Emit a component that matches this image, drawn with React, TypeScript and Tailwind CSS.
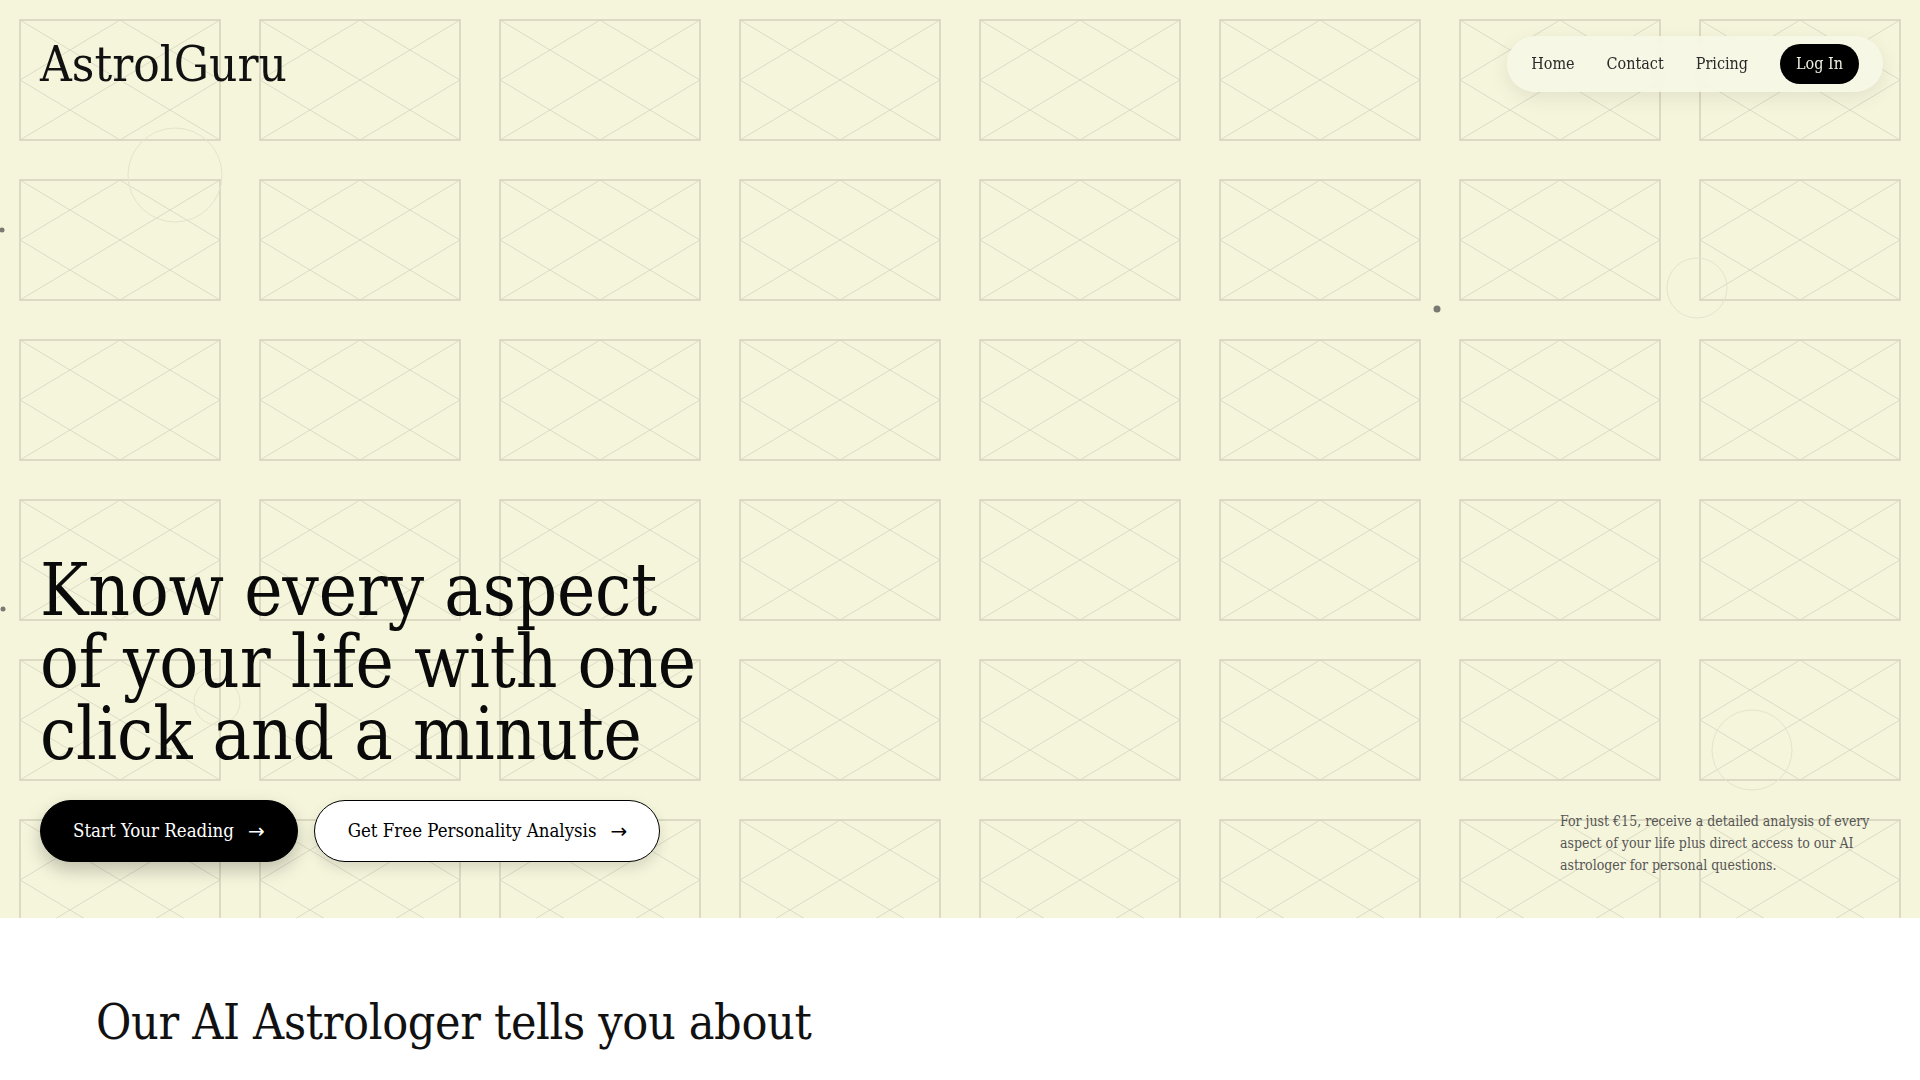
import React from "react";

const serif = { fontFamily: '"DejaVu Serif Condensed", "DejaVu Serif", "Liberation Serif", serif', fontStretch: "condensed" as const };
const arrowFont = { fontFamily: '"DejaVu Sans", sans-serif', fontStretch: "normal" as const };

function Pattern() {
  return (
    <svg className="absolute inset-0 w-full h-full" xmlns="http://www.w3.org/2000/svg" aria-hidden="true">
      <defs>
        <pattern id="kundli" x="0" y="0" width="240" height="160" patternUnits="userSpaceOnUse">
          <g fill="none">
            <g stroke="#dcdac4" strokeWidth="1">
              <line x1="20" y1="20" x2="220" y2="140" />
              <line x1="220" y1="20" x2="20" y2="140" />
              <polygon points="120,20 220,80 120,140 20,80" />
            </g>
            <rect x="20" y="20" width="200" height="120" stroke="#d3d1ba" strokeWidth="1.5" />
          </g>
        </pattern>
      </defs>
      <rect width="100%" height="100%" fill="url(#kundli)" />
      <g fill="none" stroke="#e4e3cc" strokeWidth="1">
        <circle cx="175" cy="175" r="47" />
        <circle cx="1697" cy="288" r="30" />
        <circle cx="1752" cy="750" r="40" />
        <circle cx="217" cy="702" r="23" />
      </g>
      <g fill="#7a7a72">
        <circle cx="2" cy="230" r="2.5" />
        <circle cx="1437" cy="309" r="3.5" />
        <circle cx="3" cy="609" r="2.5" />
      </g>
    </svg>
  );
}

export default function App() {
  return (
    <div className="min-h-screen bg-white" style={serif}>
      <section className="relative h-[85vh] bg-[#f5f5dc] overflow-hidden">
        <Pattern />
        <div className="relative z-10 flex flex-col h-full">
          <header className="flex items-center justify-between pl-10 pr-[37px] pt-9">
            <div className="text-[49px] leading-none text-[#111]">AstrolGuru</div>
            <nav className="flex items-center gap-8 rounded-full bg-[#f7f7e6]/85 backdrop-blur-sm pl-6 pr-6 py-2 shadow-[0_6px_20px_rgba(0,0,0,0.08)]">
              <a className="text-base text-[#2a2a2a]">Home</a>
              <a className="text-base text-[#2a2a2a]">Contact</a>
              <a className="text-base text-[#2a2a2a]">Pricing</a>
              <a className="rounded-full bg-black px-4 py-2 text-base leading-6 text-[#f0f0e0]">Log In</a>
            </nav>
          </header>
          <div className="flex-1 flex items-end justify-between pl-10 pr-10 pb-[42px]">
            <div className="pb-[14px]">
              <h1 className="text-[72px] leading-[72px] text-[#0a0a0a] font-normal tracking-[-0.2px]">
                Know every aspect
                <br />
                of your life with one
                <br />
                click and a minute
              </h1>
              <div className="mt-[30px] flex gap-4">
                <button className="flex items-center gap-[14px] rounded-full border border-black bg-black pl-8 pr-8 py-4 text-[18.5px] leading-7 text-white shadow-[0_8px_18px_rgba(0,0,0,0.22)]">
                  <span>Start Your Reading</span>
                  <span className="text-[20px]" style={arrowFont}>→</span>
                </button>
                <button className="flex items-center gap-[14px] rounded-full border border-black bg-white pl-[33px] pr-8 py-4 text-[18.5px] leading-7 text-black shadow-[0_6px_14px_rgba(0,0,0,0.12)]">
                  <span>Get Free Personality Analysis</span>
                  <span className="text-[20px]" style={arrowFont}>→</span>
                </button>
              </div>
            </div>
            <p className="max-w-xs text-sm leading-[22px] text-[#555]">
              For just €15, receive a detailed analysis of every aspect of your life plus direct access to our AI astrologer for personal questions.
            </p>
          </div>
        </div>
      </section>
      <section className="bg-white px-24 pt-20 pb-24">
        <h2 className="text-[48px] leading-none text-[#111] font-normal tracking-[-0.35px]">Our AI Astrologer tells you about</h2>
      </section>
    </div>
  );
}
